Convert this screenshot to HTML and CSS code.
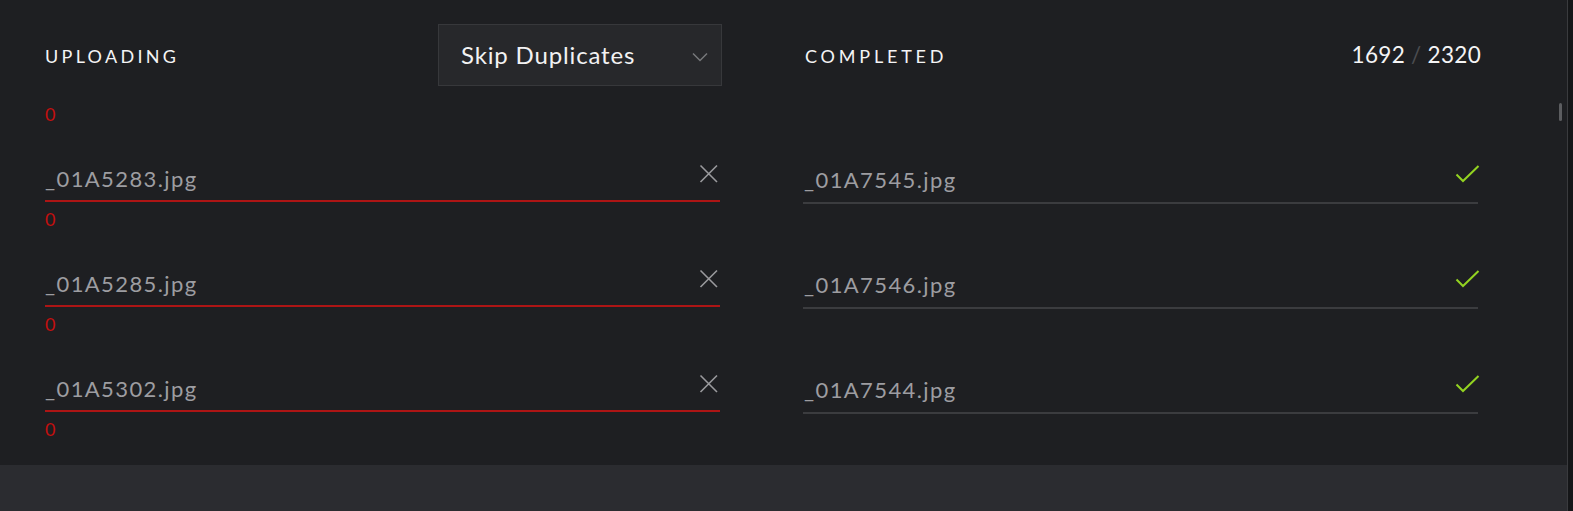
FILE: index.html
```html
<!DOCTYPE html>
<html>
<head>
<meta charset="utf-8">
<link rel="stylesheet" href="styles.css">
</head>
<body>
<div class="page">
  <div class="app">
    <div class="panel">
      <section class="col col-left">
        <div class="col-head">
          <h2 class="title">UPLOADING</h2>
          <div class="select">
            <span class="select-text">Skip Duplicates</span>
            <svg class="chev" width="16" height="10" viewBox="0 0 16 10"><path d="M1 1.5 L8 8.5 L15 1.5" fill="none" stroke="#77787b" stroke-width="1.5"/></svg>
          </div>
        </div>
        <div class="up-list">
          <div class="count">0</div>
          <div class="up-item">
            <div class="up-row"><span class="fname">_01A5283.jpg</span><svg class="x" width="20" height="20" viewBox="0 0 20 20"><path d="M1.5 1.5 L18 18 M18 1.5 L1.5 18" stroke="#9a9a9d" stroke-width="1.6" fill="none"/></svg></div>
            <div class="count">0</div>
          </div>
          <div class="up-item">
            <div class="up-row"><span class="fname">_01A5285.jpg</span><svg class="x" width="20" height="20" viewBox="0 0 20 20"><path d="M1.5 1.5 L18 18 M18 1.5 L1.5 18" stroke="#9a9a9d" stroke-width="1.6" fill="none"/></svg></div>
            <div class="count">0</div>
          </div>
          <div class="up-item">
            <div class="up-row"><span class="fname">_01A5302.jpg</span><svg class="x" width="20" height="20" viewBox="0 0 20 20"><path d="M1.5 1.5 L18 18 M18 1.5 L1.5 18" stroke="#9a9a9d" stroke-width="1.6" fill="none"/></svg></div>
            <div class="count">0</div>
          </div>
        </div>
      </section>
      <section class="col col-right">
        <div class="col-head">
          <h2 class="title">COMPLETED</h2>
          <div class="total">1692 <span class="slash">/</span> 2320</div>
        </div>
        <div class="done-list">
          <div class="done-row"><span class="fname">_01A7545.jpg</span><svg class="check" width="25" height="20" viewBox="0 0 25 20"><path d="M1.5 10.5 L8 17 L23.5 2" stroke="#93d321" stroke-width="2" fill="none"/></svg></div>
          <div class="done-row"><span class="fname">_01A7546.jpg</span><svg class="check" width="25" height="20" viewBox="0 0 25 20"><path d="M1.5 10.5 L8 17 L23.5 2" stroke="#93d321" stroke-width="2" fill="none"/></svg></div>
          <div class="done-row"><span class="fname">_01A7544.jpg</span><svg class="check" width="25" height="20" viewBox="0 0 25 20"><path d="M1.5 10.5 L8 17 L23.5 2" stroke="#93d321" stroke-width="2" fill="none"/></svg></div>
        </div>
      </section>
      <div class="thumb"></div>
    </div>
    <div class="footer"></div>
  </div>
  <div class="edge"></div>
</div>
</body>
</html>
```

FILE: styles.css
```css
* { box-sizing: border-box; }
html, body { margin: 0; padding: 0; }
body {
  background: #151618;
  font-family: Lato, "Liberation Sans", sans-serif;
  height: 511px;
  overflow: hidden;
}
.page {
  display: flex;
  height: 511px;
}
.app {
  width: 1568px;
  display: flex;
  flex-direction: column;
  border-right: 1px solid #3a3b3e;
}
.panel {
  position: relative;
  height: 465px;
  flex: 0 0 465px;
  background: #1e1f22;
  padding: 24px 0 0 45px;
  display: grid;
  grid-template-columns: 676px 675px;
  column-gap: 83px;
  align-items: start;
}
.footer {
  flex: 1;
  background: #2b2c30;
}
.edge {
  flex: 1;
  background: #151618;
}
.col-head {
  height: 62px;
  display: flex;
  align-items: center;
  justify-content: space-between;
}
.title {
  margin: 0;
  font-size: 18px;
  font-weight: 400;
  letter-spacing: 3.3px;
  color: #f4f4f5;
  line-height: 20px;
  padding-top: 1px;
}
.col-right .title { letter-spacing: 3.8px; margin-left: 1px; }
.select {
  width: 284px;
  height: 62px;
  margin-right: -1px;
  background: #27282b;
  border: 1px solid #37383b;
  display: flex;
  align-items: center;
  justify-content: space-between;
  padding: 0 13px 0 22px;
}
.select-text {
  font-size: 24px;
  letter-spacing: 0.85px;
  color: #f2f2f3;
  line-height: 28px;
  padding-bottom: 1px;
}
.chev { display: block; margin-top: 4px; }
.total {
  font-size: 22.5px;
  color: #f4f4f5;
  line-height: 26px;
  letter-spacing: 0.3px;
  margin-right: -2px;
}
.slash { color: #4b4c50; }
.up-list { margin-top: 18px; }
.count {
  font-size: 18px;
  line-height: 20px;
  color: #c40f0f;
}
.up-row {
  margin-top: 42px;
  padding-bottom: 8px;
  border-bottom: 2px solid #ad1515;
  margin-right: 1px;
  display: flex;
  justify-content: space-between;
  align-items: flex-start;
}
.up-item .count { margin-top: 7px; }
.fname {
  font-size: 22px;
  line-height: 26px;
  letter-spacing: 1.4px;
  color: #9d9da1;
}
.x { display: block; margin-top: -2px; margin-right: 1px; }
.done-list { padding-top: 13px; }
.done-row {
  margin-top: 68px;
  padding-bottom: 9px;
  border-bottom: 2px solid #3b3c3f;
  margin-left: -1px;
  margin-right: 1px;
  display: flex;
  justify-content: space-between;
  align-items: flex-start;
}
.done-row .fname { margin-left: 1px; }
.check { display: block; margin-top: -3px; margin-right: -2px; }
.thumb {
  position: absolute;
  left: 1559px;
  top: 103px;
  width: 3px;
  height: 18px;
  border-radius: 2px;
  background: #5c5d60;
}
```
